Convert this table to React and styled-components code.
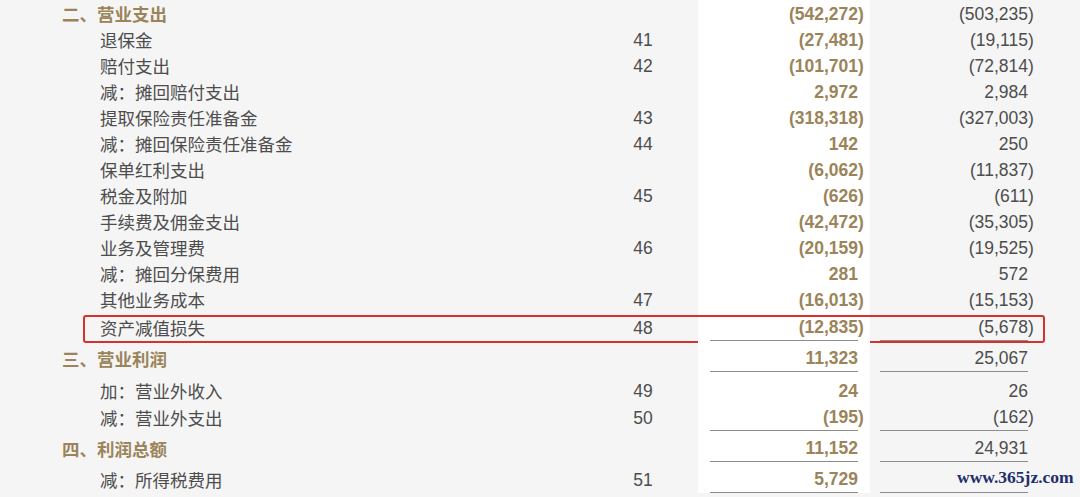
import React from 'react';
import styled, {createGlobalStyle} from 'styled-components';

const GlobalStyle = createGlobalStyle`
  html, body {
    margin: 0;
    padding: 0;
    background: #f5f5f5;
  }
`;

const Page = styled.div`
  position: relative;
  display: flex;
  flex-direction: column;
  padding-left: 62px;
  width: 1080px;
  box-sizing: border-box;
  font-family: "Noto Sans CJK SC", "Noto Sans", sans-serif;
  color: #4d4d4d;
`;

const Row = styled.div`
  position: relative;
  display: grid;
  grid-template-columns: 536px 100px 172px 172px;
  align-items: end;
  padding-top: ${p => p.$pt || 0}px;

  ${p => p.$marked && `
    &::after {
      content: "";
      position: absolute;
      left: 21px;
      right: 35px;
      top: ${p.$pt}px;
      bottom: -2px;
      border: 2px solid #d8312c;
      border-radius: 3px;
      pointer-events: none;
    }
  `}
`;

const Label = styled.div`
  height: 26px;
  line-height: 26px;
  font-size: 17.5px;
  white-space: nowrap;
  padding-left: ${p => (p.$head ? 0 : 38)}px;
  font-weight: ${p => (p.$head ? 700 : 400)};
  color: ${p => (p.$head ? '#9b8459' : '#4d4d4d')};
`;

const Note = styled.div`
  height: 26px;
  line-height: 26px;
  font-family: "Liberation Sans", Arial, sans-serif;
  font-size: 17.5px;
  text-align: center;
  padding-right: 10px;
  color: #4d4d4d;
`;

const Col = styled.div`
  align-self: stretch;
  display: flex;
  flex-direction: column;
  justify-content: flex-end;
  margin-top: -${p => p.$pt || 0}px;
  background: ${p => (p.$current ? '#ffffff' : 'transparent')};
  padding: ${p => (p.$current ? '0 12px' : '0 14px 0 10px')};
`;

const Amount = styled.div`
  height: 26px;
  line-height: 26px;
  text-align: right;
  white-space: nowrap;
  font-family: "Liberation Sans", Arial, sans-serif;
  font-size: 17.5px;
  font-weight: ${p => (p.$current ? 700 : 400)};
  color: ${p => (p.$current ? '#9b8459' : '#4d4d4d')};
  border-bottom: ${p => (p.$rule ? '1px solid #8c8c8c' : 'none')};
`;

const Hang = styled.span`
  margin-right: -0.333em;
`;

const Watermark = styled.div`
  position: absolute;
  left: 955px;
  top: 467px;
  padding: 0 2px;
  font-family: "Liberation Serif", "DejaVu Serif", serif;
  font-weight: 700;
  font-size: 17.5px;
  color: #1f2f6b;
  background: rgba(245, 245, 245, 0.85);
`;

const rows = [
    {label: '二、营业支出', head: true, cur: '(542,272)', prev: '(503,235)', pt: 1},
    {label: '退保金', note: '41', cur: '(27,481)', prev: '(19,115)'},
    {label: '赔付支出', note: '42', cur: '(101,701)', prev: '(72,814)'},
    {label: '减：摊回赔付支出', cur: '2,972', prev: '2,984'},
    {label: '提取保险责任准备金', note: '43', cur: '(318,318)', prev: '(327,003)'},
    {label: '减：摊回保险责任准备金', note: '44', cur: '142', prev: '250'},
    {label: '保单红利支出', cur: '(6,062)', prev: '(11,837)'},
    {label: '税金及附加', note: '45', cur: '(626)', prev: '(611)'},
    {label: '手续费及佣金支出', cur: '(42,472)', prev: '(35,305)'},
    {label: '业务及管理费', note: '46', cur: '(20,159)', prev: '(19,525)'},
    {label: '减：摊回分保费用', cur: '281', prev: '572'},
    {label: '其他业务成本', note: '47', cur: '(16,013)', prev: '(15,153)'},
    {label: '资产减值损失', note: '48', cur: '(12,835)', prev: '(5,678)', rule: true, pt: 2, marked: true},
    {label: '三、营业利润', head: true, cur: '11,323', prev: '25,067', rule: true, pt: 5},
    {label: '加：营业外收入', note: '49', cur: '24', prev: '26', pt: 6},
    {label: '减：营业外支出', note: '50', cur: '(195)', prev: '(162)', rule: true, pt: 1},
    {label: '四、利润总额', head: true, cur: '11,152', prev: '24,931', rule: true, pt: 5},
    {label: '减：所得税费用', note: '51', cur: '5,729', prev: '', rule: true, pt: 5},
];

const Value = ({text}) => {
    if (text.endsWith(')')) {
        return <>{text.slice(0, -1)}<Hang>)</Hang></>;
    }
    return text;
};

const App = () => (
    <Page>
        <GlobalStyle/>
        {rows.map((r, i) => (
            <Row key={i} $pt={r.pt} $marked={r.marked}>
                <Label $head={r.head}>{r.label}</Label>
                <Note>{r.note}</Note>
                <Col $current $pt={r.pt}>
                    <Amount $current $rule={r.rule}><Value text={r.cur}/></Amount>
                </Col>
                <Col $pt={r.pt}>
                    <Amount $rule={r.rule}><Value text={r.prev}/></Amount>
                </Col>
            </Row>
        ))}
        <Watermark>www.365jz.com</Watermark>
    </Page>
);

export default App;
